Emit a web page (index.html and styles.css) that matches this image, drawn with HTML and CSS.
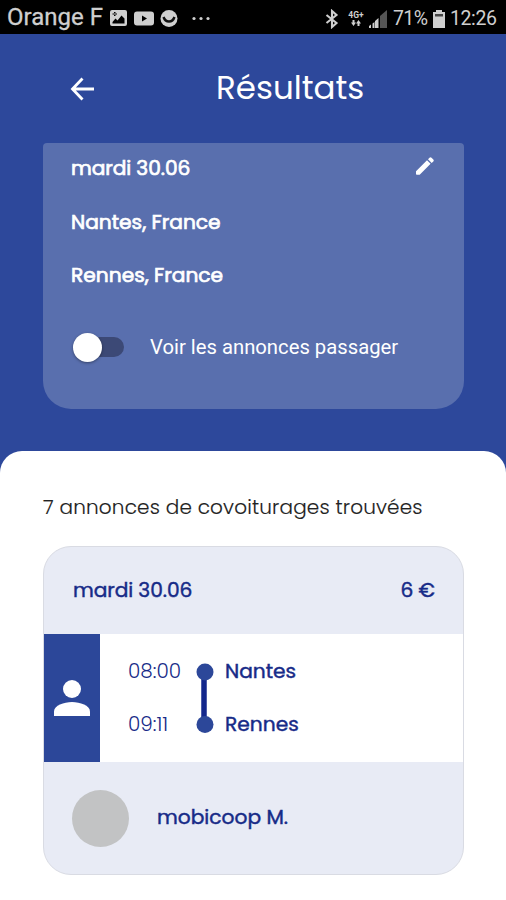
FILE: index.html
```html
<!DOCTYPE html>
<html lang="fr">
<head>
<meta charset="utf-8">
<title>Résultats</title>
<link rel="stylesheet" href="styles.css">
</head>
<body>
<div class="status">
  <span class="carrier">Orange F</span>
  <svg class="notif" width="104" height="20" viewBox="0 0 104 20" fill="#cfcfcf">
    <path fill-rule="evenodd" d="M2 1h13q2 0 2 2v12q0 2-2 2H2q-2 0-2-2V3q0-2 2-2zM2.500 14.500h12V9.500l-3-3-4 5-2-2-3 3.500zM4 3v4h1.500V3zM2.500 4.500v1h4.500v-1z"/>
    <path fill-rule="evenodd" d="M27 2.500h14q3 0 3 3v8q0 3-3 3H27q-3 0-3-3v-8q0-3 3-3zM32 6.500v6l5-3z"/>
    <circle cx="59" cy="9.500" r="8.500"/>
    <path d="M53.500 8q1.500 4.500 5.500 4.500T64.500 8" fill="none" stroke="#111" stroke-width="2.400"/>
    <circle cx="84" cy="9.500" r="1.600"/><circle cx="91" cy="9.500" r="1.600"/><circle cx="98" cy="9.500" r="1.600"/>
  </svg>
  <div class="system">
    <svg width="14" height="20" viewBox="0 0 14 20" fill="none" stroke="#cfcfcf" stroke-width="2.100"><path d="M1.500 6l10 8-4.500 4V2l4.500 4-10 8"/></svg>
    <span class="net"><span>4G+</span><svg width="10" height="6" viewBox="0 0 10 6" fill="#cfcfcf"><path d="M1.500 0h2v2.500H5L2.500 6 0 2.500h1.500zM6.500 6h2V3.500H10L7.500 0 5 3.500h1.500z"/></svg></span>
    <svg class="signal" width="18" height="18" viewBox="0 0 18 18"><path d="M0 18v-2l2-1.500V18z M3.500 18v-4.500l2-1.500v6z M6 18v-7l3.500-3v10z" fill="#cfcfcf"/><path d="M11 18V6l7-6v18z" fill="#555"/></svg>
    <span class="percent">71%</span>
    <svg class="battery" width="12" height="18" viewBox="0 0 12 18"><path d="M3 0h6v2h3v16H0V2h3z" fill="#cfcfcf"/><path d="M2 4h8v2.500H2z" fill="#444"/></svg>
    <span class="clock">12:26</span>
  </div>
</div>
<header class="bar">
  <svg width="24" height="24" viewBox="0 0 24 24" fill="none" stroke="#fff" stroke-width="2.800"><path d="M12.500 1.500L2.500 12l10 10.500M2.500 12H24"/></svg>
  <h1>Résultats</h1>
</header>
<section class="search">
  <div class="row"><span class="date">mardi 30.06</span>
    <svg width="18" height="18" viewBox="0 0 18 18" fill="#fff"><path d="M0 14.200L11 3.200 14.600 6.800 3.700 17.800H.8Q0 17.800 0 17zM12 2.200L13.500.7Q14.500-.2 15.500.7L17.300 2.500Q18.200 3.500 17.300 4.400L15.700 5.900z"/></svg>
  </div>
  <p class="from">Nantes, France</p>
  <p class="to">Rennes, France</p>
  <div class="option"><span class="toggle"><span class="track"></span><span class="thumb"></span></span><span class="label">Voir les annonces passager</span></div>
</section>
<main class="sheet">
  <p class="count">7 annonces de covoiturages trouvées</p>
  <article class="offer">
    <div class="top"><span class="date">mardi 30.06</span><span class="price">6 €</span></div>
    <div class="trip">
      <div class="role"><svg width="36" height="36" viewBox="0 0 36 36" fill="#fff"><circle cx="18" cy="9" r="9"/><path d="M0 36v-4.500C0 25.500 10 22 18 22s18 3.500 18 9.500V36z"/></svg></div>
      <div class="times"><span>08:00</span><span>09:11</span></div>
      <svg class="line" width="18" height="70" viewBox="0 0 18 70"><path d="M8 9v52" stroke="#13278c" stroke-width="5.500"/><circle cx="9" cy="9" r="8.500" fill="#2c4799"/><circle cx="9" cy="61.500" r="8.500" fill="#2c4799"/></svg>
      <div class="stops"><span>Nantes</span><span>Rennes</span></div>
    </div>
    <div class="driver"><span class="avatar"></span><span class="name">mobicoop M.</span></div>
  </article>
</main>
</body>
</html>
```
FILE: styles.css
```css
* { box-sizing: border-box; }
body {
  margin: 0;
  width: 506px;
  height: 900px;
  overflow: hidden;
  background: #2d489b;
  color: #fff;
  font-family: Poppins, Inter, "Liberation Sans", sans-serif;
  display: flex;
  flex-direction: column;
}
p, h1 { margin: 0; }
svg { display: block; flex: none; }
span, p, h1 { white-space: nowrap; }

.status {
  height: 34px;
  flex: none;
  padding: 0 9px 0 7px;
  display: flex;
  align-items: center;
  background: #000;
  color: #cfcfcf;
  font-family: Roboto, sans-serif;
}
.carrier { width: 103px; font-size: 24px; line-height: 34px; -webkit-text-stroke: .3px; }
.notif { margin-top: 3px; }
.system { display: flex; align-items: center; margin-left: auto; padding-top: 3px; }
.net { width: 18px; margin-left: 8px; font-size: 8.500px; line-height: 9px; font-weight: 700; display: flex; flex-direction: column; align-items: center; }
.signal { margin-left: 4px; }
.percent { width: 35px; margin-left: 6px; font-size: 19.500px; letter-spacing: -.6px; }
.battery { margin-left: 5px; }
.clock { width: 47px; margin-left: 5px; font-size: 19.500px; letter-spacing: -.4px; }

.bar { height: 109px; flex: none; display: flex; padding: 0 0 0 70px; }
.bar svg { margin-top: 43px; }
.bar h1 { margin: 34px 0 0 122px; font-size: 32.500px; line-height: 40px; font-weight: 400; }

.search {
  width: 421px;
  height: 266px;
  flex: none;
  margin-left: 43px;
  padding: 11px 30px 0 28px;
  border-radius: 4px 4px 28px 28px;
  background: #596fae;
  font-size: 20.200px;
  line-height: 28px;
  font-weight: 400;
  -webkit-text-stroke: .7px;
}
.date { letter-spacing: -.1px; }
.row { display: flex; justify-content: space-between; }
.row svg { margin-top: 3px; }
.from { margin-top: 26px; }
.to { margin-top: 25px; }
.option { display: flex; align-items: center; height: 30px; margin-top: 43px; -webkit-text-stroke: 0; }
.toggle { width: 51px; margin-left: 2px; display: flex; align-items: center; }
.track { width: 42px; height: 20px; margin-left: 9px; border-radius: 10px; background: #3c4976; }
.thumb { width: 29px; height: 29px; margin-left: -51px; border-radius: 50%; background: #fff; box-shadow: 0 1px 3px #0006; flex: none; }
.label { margin-left: 26px; font: 400 20.250px/28px Roboto, sans-serif; }

.sheet { height: 449px; flex: none; margin-top: 42px; padding: 41px 42px 0 43px; border-radius: 22px 22px 0 0; background: #fff; }
.count { color: #222; font-size: 20px; line-height: 30px; font-weight: 300; letter-spacing: .17px; -webkit-text-stroke: .15px; }
.offer {
  width: 421px;
  height: 329px;
  margin-top: 24px;
  border: 1px solid #d9dbe3;
  border-radius: 28px;
  overflow: hidden;
  background: #e8ebf5;
  color: #172b88;
  font-size: 20.200px;
  line-height: 28px;
  font-weight: 400;
  -webkit-text-stroke: .45px;
}
.top { height: 87px; padding: 0 28px 2px 29px; display: flex; justify-content: space-between; align-items: center; }
.trip { height: 128px; display: flex; background: #fff; }
.role { width: 56px; display: flex; justify-content: center; padding-top: 46px; background: #2c4799; }
.times { width: 68px; margin-left: 28px; padding-top: 23px; display: flex; flex-direction: column; gap: 25px; font-weight: 300; font-size: 20px; -webkit-text-stroke: 0; }
.line { margin-top: 29px; }
.stops { margin-left: 11px; padding-top: 23px; display: flex; flex-direction: column; gap: 25px; }
.driver { height: 112px; padding-left: 28px; display: flex; align-items: center; }
.avatar { width: 57px; height: 57px; border-radius: 50%; background: #c2c3c4; }
.name { margin: -2px 0 0 28px; }
```
